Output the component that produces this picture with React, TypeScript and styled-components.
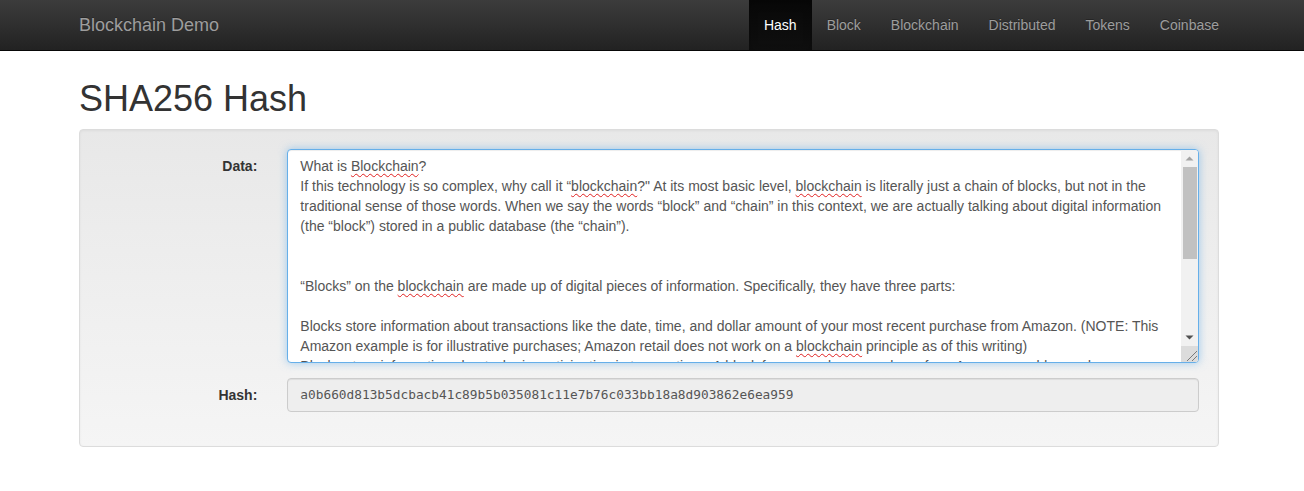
import React from "react";
import styled, { createGlobalStyle } from "styled-components";

const GlobalStyle = createGlobalStyle`
  html, body { margin: 0; padding: 0; background: #fff; }
  body {
    font-family: "Liberation Sans", Arial, Helvetica, sans-serif;
    font-size: 14px;
    line-height: 1.42857143;
    color: #333;
  }
  * { box-sizing: border-box; }
`;

const Navbar = styled.nav`
  height: 51px;
  background-image: linear-gradient(to bottom, #3c3c3c 0, #222 100%);
  border-bottom: 1px solid #080808;
`;

const Container = styled.div`
  width: 1170px;
  margin-left: 64px;
  padding: 0 15px;
`;

const NavInner = styled(Container)`
  display: flex;
  justify-content: space-between;
  height: 50px;
`;

const Brand = styled.a`
  display: block;
  margin-left: -15px;
  padding: 15px;
  height: 50px;
  font-size: 18px;
  line-height: 20px;
  color: #9d9d9d;
  text-decoration: none;
  text-shadow: 0 -1px 0 rgba(0, 0, 0, 0.25);
`;

const NavList = styled.ul`
  display: flex;
  list-style: none;
  margin: 0 -15px 0 0;
  padding: 0;
`;

const NavLink = styled.a<{ $active?: boolean }>`
  display: block;
  padding: 15px;
  line-height: 20px;
  font-size: 14px;
  text-decoration: none;
  color: ${(p) => (p.$active ? "#fff" : "#9d9d9d")};
  text-shadow: 0 -1px 0 rgba(0, 0, 0, 0.25);
  background-image: ${(p) =>
    p.$active ? "linear-gradient(to bottom, #080808 0, #0f0f0f 100%)" : "none"};
  box-shadow: ${(p) => (p.$active ? "inset 0 3px 9px rgba(0,0,0,.25)" : "none")};
`;

const Title = styled.h1`
  margin: 28px 0 10px;
  font-size: 36px;
  font-weight: 500;
  line-height: 1.1;
  color: #333;
`;

const Well = styled.div`
  padding: 19px;
  border: 1px solid #dcdcdc;
  border-radius: 4px;
  background-image: linear-gradient(to bottom, #e8e8e8 0, #f5f5f5 100%);
  box-shadow: inset 0 1px 3px rgba(0, 0, 0, 0.05), 0 1px 0 rgba(255, 255, 255, 0.1);
`;

const FormGroup = styled.div`
  display: flex;
  margin: 0 -15px 15px;
`;

const Label = styled.label`
  flex: 0 0 16.66666667%;
  padding: 7px 15px 0;
  text-align: right;
  font-weight: 700;
  line-height: 20px;
`;

const Field = styled.div`
  flex: 0 0 83.33333333%;
  padding: 0 15px;
`;

const DataBox = styled.div`
  display: flex;
  height: 214px;
  border: 1px solid #66afe9;
  border-radius: 4px;
  background: #fff;
  overflow: hidden;
  box-shadow: inset 0 1px 1px rgba(0, 0, 0, 0.075), 0 0 8px rgba(102, 175, 233, 0.6);
`;

const DataText = styled.div`
  flex: 1;
  min-width: 0;
  padding: 6px 12px;
  color: #555;
  font-size: 14px;
  line-height: 20px;
  white-space: pre-wrap;
  overflow: hidden;
  outline: 0;
`;

const ScrollBar = styled.div`
  flex: 0 0 17px;
  display: flex;
  flex-direction: column;
  background: #f1f1f1;
`;

const ScrollButton = styled.div`
  flex: 0 0 17px;
  display: flex;
  align-items: center;
  justify-content: center;
`;

const ScrollTrack = styled.div`
  flex: 1;
  display: flex;
  flex-direction: column;
`;

const ScrollThumb = styled.div`
  height: 92px;
  margin: 0 1px 0 2px;
  background: #c1c1c1;
`;

const ScrollCorner = styled.div`
  flex: 0 0 16px;
  background: #dcdcdc;
  display: flex;
  align-items: flex-end;
  justify-content: flex-end;
`;

const Misspelled = styled.span`
  text-decoration: underline wavy #e02020;
  text-decoration-thickness: 1px;
  text-underline-offset: 2px;
`;

const HashBox = styled.div`
  height: 34px;
  padding: 6px 12px;
  border: 1px solid #ccc;
  border-radius: 4px;
  background: #eee;
  color: #555;
  font-family: "DejaVu Sans Mono", "Liberation Mono", monospace;
  font-size: 12.8px;
  line-height: 20px;
  box-shadow: inset 0 1px 1px rgba(0, 0, 0, 0.075);
`;

const navItems = ["Hash", "Block", "Blockchain", "Distributed", "Tokens", "Coinbase"];

export default function App() {
  return (
    <>
      <GlobalStyle />
      <Navbar>
        <NavInner>
          <Brand href="#">Blockchain Demo</Brand>
          <NavList>
            {navItems.map((n) => (
              <li key={n}>
                <NavLink href="#" $active={n === "Hash"}>
                  {n}
                </NavLink>
              </li>
            ))}
          </NavList>
        </NavInner>
      </Navbar>
      <Container>
        <Title>SHA256 Hash</Title>
        <Well>
          <FormGroup>
            <Label>Data:</Label>
            <Field>
              <DataBox>
                <DataText role="textbox" aria-multiline="true">
                  {"What is "}
                  <Misspelled>Blockchain</Misspelled>
                  {"?\nIf this technology is so complex, why call it \u201c"}
                  <Misspelled>blockchain</Misspelled>
                  {"?\" At its most basic level, "}
                  <Misspelled>blockchain</Misspelled>
                  {
                    " is literally just a chain of blocks, but not in the traditional sense of those words. When we say the words \u201cblock\u201d and \u201cchain\u201d in this context, we are actually talking about digital information (the \u201cblock\u201d) stored in a public database (the \u201cchain\u201d).\n\n\n\u201cBlocks\u201d on the "
                  }
                  <Misspelled>blockchain</Misspelled>
                  {
                    " are made up of digital pieces of information. Specifically, they have three parts:\n\nBlocks store information about transactions like the date, time, and dollar amount of your most recent purchase from Amazon. (NOTE: This Amazon example is for illustrative purchases; Amazon retail does not work on a "
                  }
                  <Misspelled>blockchain</Misspelled>
                  {
                    " principle as of this writing)\nBlocks store information about who is participating in transactions. A block for your splurge purchase from Amazon would record Amazon.com, Inc. (AMZN) as a participant in the transaction, but as of this writing, it would not record your name."
                  }
                </DataText>
                <ScrollBar aria-hidden="true">
                  <ScrollButton>
                    <svg width="9" height="5" viewBox="0 0 9 5">
                      <polygon points="0.5,4.5 8.5,4.5 4.5,0.5" fill="#a3a3a3" />
                    </svg>
                  </ScrollButton>
                  <ScrollTrack>
                    <ScrollThumb />
                  </ScrollTrack>
                  <ScrollButton>
                    <svg width="9" height="5" viewBox="0 0 9 5">
                      <polygon points="0.5,0.5 8.5,0.5 4.5,4.5" fill="#505050" />
                    </svg>
                  </ScrollButton>
                  <ScrollCorner>
                    <svg width="16" height="16" viewBox="0 0 16 16">
                      <path d="M5 15 L15 5 M10 15 L15 10" stroke="#7a7a7a" strokeWidth="1" />
                    </svg>
                  </ScrollCorner>
                </ScrollBar>
              </DataBox>
            </Field>
          </FormGroup>
          <FormGroup>
            <Label>Hash:</Label>
            <Field>
              <HashBox>a0b660d813b5dcbacb41c89b5b035081c11e7b76c033bb18a8d903862e6ea959</HashBox>
            </Field>
          </FormGroup>
        </Well>
      </Container>
    </>
  );
}
